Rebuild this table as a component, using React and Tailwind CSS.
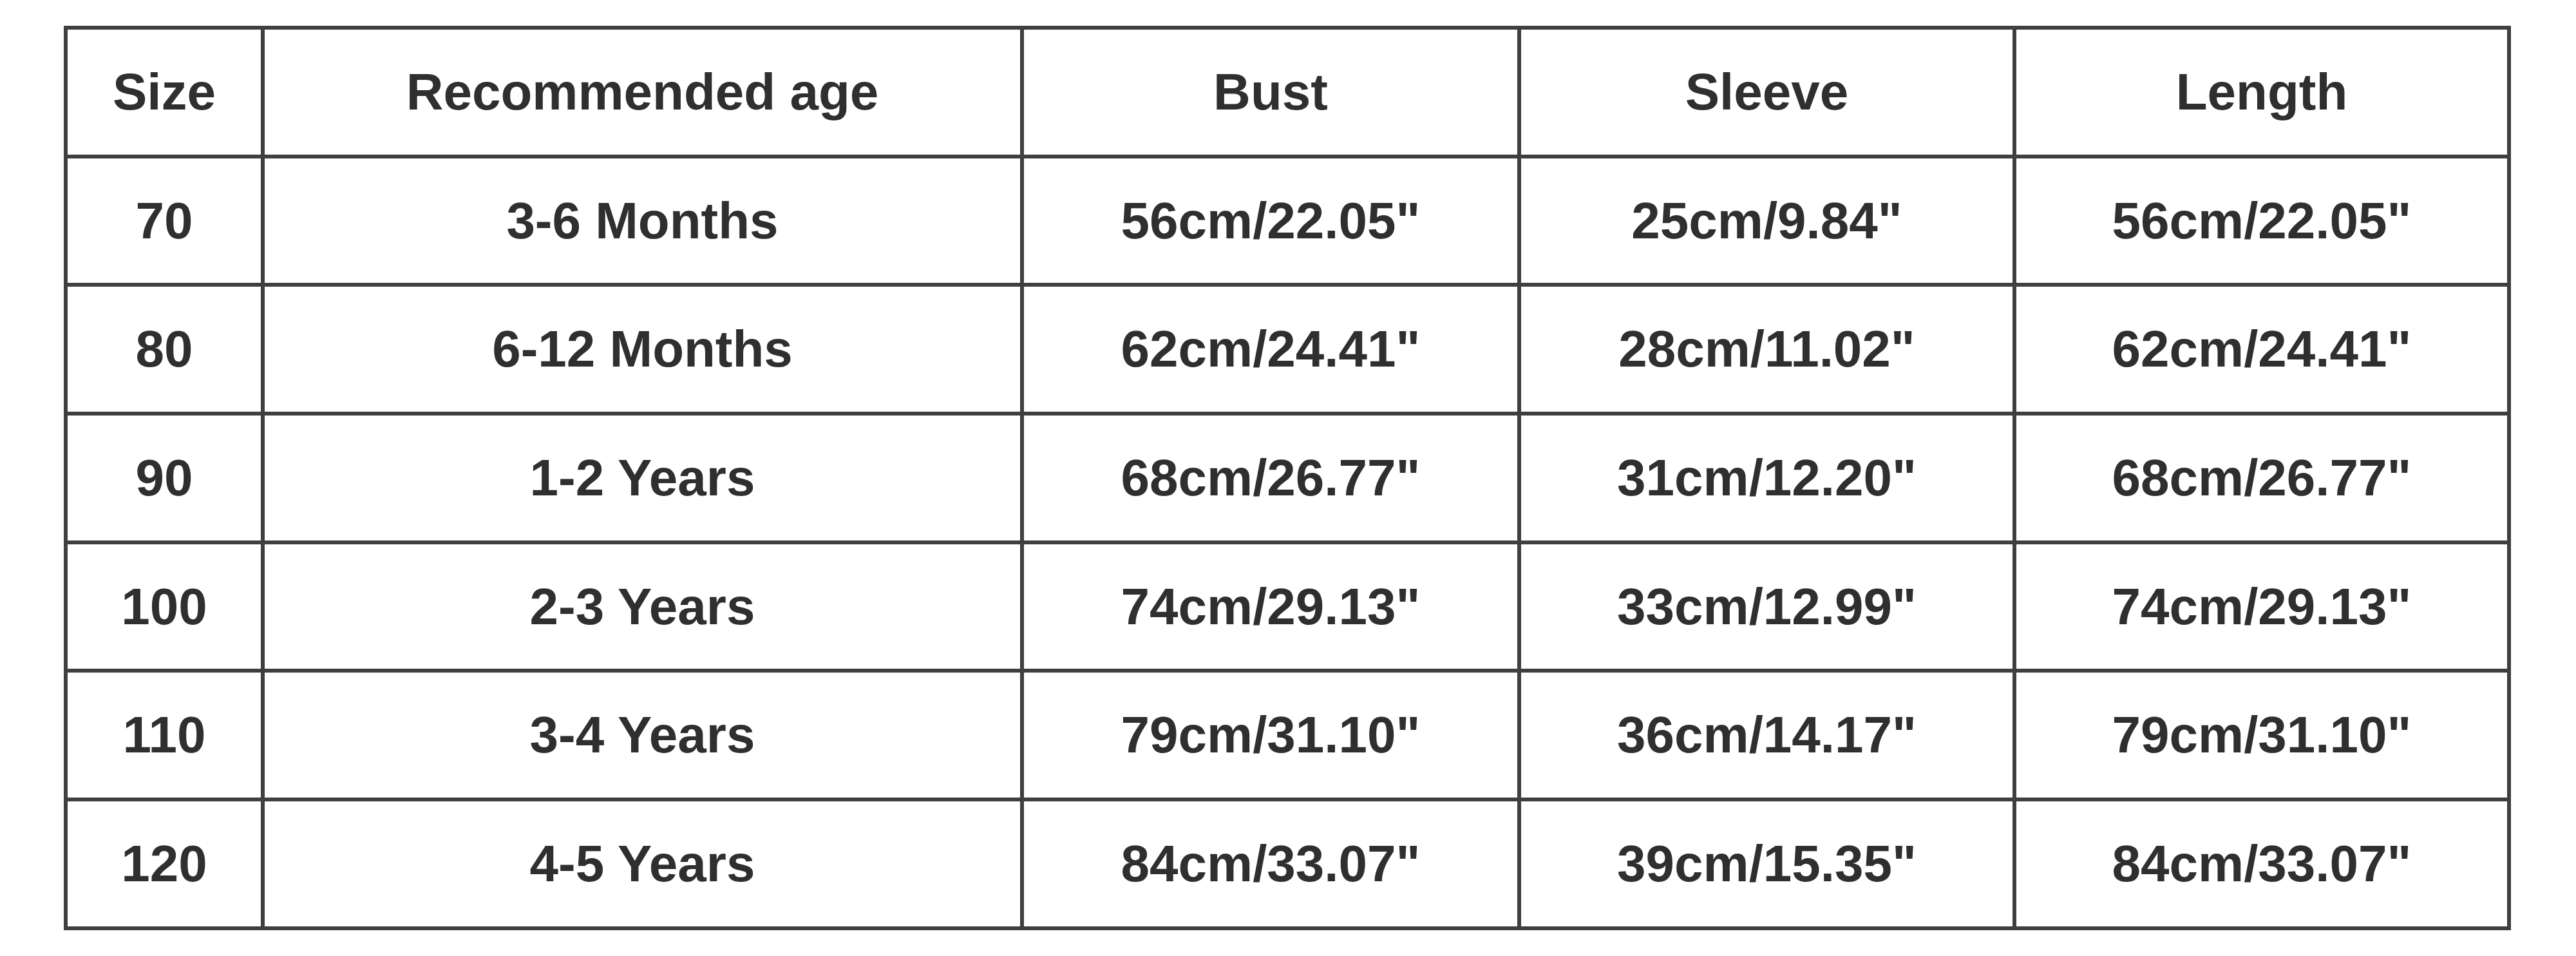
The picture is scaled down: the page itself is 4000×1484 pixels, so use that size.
const headers = ["Size", "Recommended age", "Bust", "Sleeve", "Length"];

const rows = [
  ["70", "3-6 Months", "56cm/22.05\"", "25cm/9.84\"", "56cm/22.05\""],
  ["80", "6-12 Months", "62cm/24.41\"", "28cm/11.02\"", "62cm/24.41\""],
  ["90", "1-2 Years", "68cm/26.77\"", "31cm/12.20\"", "68cm/26.77\""],
  ["100", "2-3 Years", "74cm/29.13\"", "33cm/12.99\"", "74cm/29.13\""],
  ["110", "3-4 Years", "79cm/31.10\"", "36cm/14.17\"", "79cm/31.10\""],
  ["120", "4-5 Years", "84cm/33.07\"", "39cm/15.35\"", "84cm/33.07\""],
];

function Cell({ children }) {
  return (
    <div className="flex h-[193.7px] items-center justify-center bg-white text-[80px] font-bold leading-none text-[#2f2f2f]">
      {children}
    </div>
  );
}

export default function App() {
  return (
    <div
      className="min-h-[1484px] w-full bg-white pl-[99px] pt-[40px]"
      style={{ fontFamily: '"Liberation Sans", Arial, sans-serif' }}
    >
      <div className="grid w-fit grid-cols-[300px_1173px_766px_763px_762px] gap-[6px] bg-[#3f3f3f] p-[6px]">
        {headers.map((h) => (
          <Cell key={h}>{h}</Cell>
        ))}
        {rows.map((row) =>
          row.map((value, i) => <Cell key={row[0] + "-" + i}>{value}</Cell>)
        )}
      </div>
    </div>
  );
}
